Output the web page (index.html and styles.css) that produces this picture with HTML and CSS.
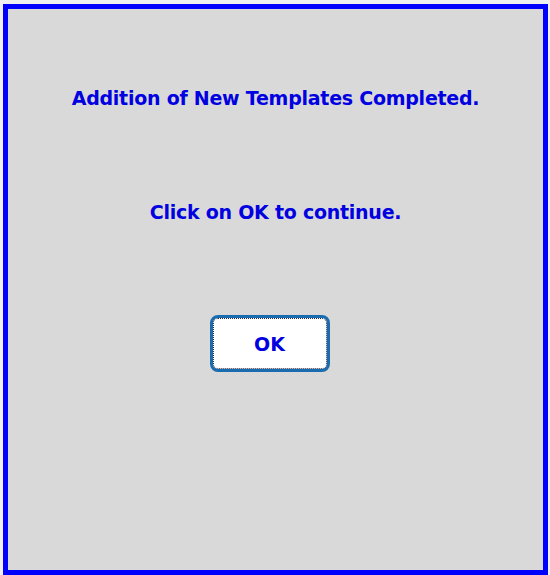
FILE: index.html
```html
<!DOCTYPE html>
<html>
<head>
<meta charset="utf-8">
<link rel="stylesheet" href="styles.css">
</head>
<body>
<div class="dialog">
  <p class="msg title">Addition of New Templates Completed.</p>
  <p class="msg sub">Click on OK to continue.</p>
  <button class="ok">OK</button>
</div>
</body>
</html>
```
FILE: styles.css
```css
html, body {
  margin: 0;
  padding: 0;
  background: #f0f0f0;
}
.dialog {
  box-sizing: border-box;
  margin: 4px 2px 0 3px;
  height: 571px;
  border: 5px solid #0000ff;
  background: #d9d9d9;
  display: flex;
  flex-direction: column;
  align-items: center;
  padding-top: 77px;
  font-family: "DejaVu Sans", Verdana, sans-serif;
  font-weight: bold;
  color: #0000e0;
}
.msg {
  margin: 0;
  font-size: 19px;
  letter-spacing: -0.25px;
  line-height: 24px;
}
.sub {
  margin-top: 90px;
}
.ok {
  margin-top: 91px;
  margin-right: 12px;
  box-sizing: border-box;
  width: 120px;
  height: 57px;
  background: #ffffff;
  border: 3px solid #1a6cb0;
  border-radius: 8px;
  outline: 1px dotted #2a2a40;
  outline-offset: -4px;
  font-family: "DejaVu Sans", Verdana, sans-serif;
  font-weight: bold;
  font-size: 19px;
  color: #0000e0;
  padding: 0;
}
```
